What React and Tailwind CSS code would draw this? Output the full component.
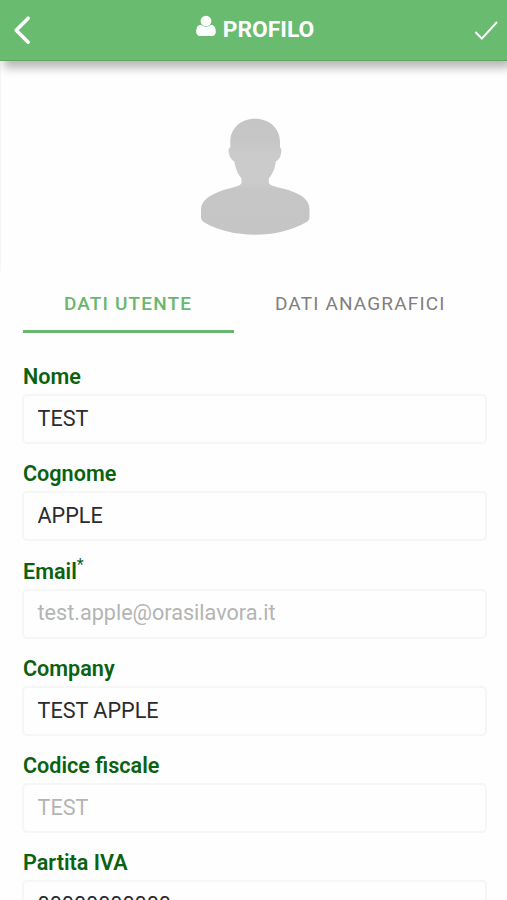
import React from 'react'

const fields = [
  { label: 'Nome', value: 'TEST' },
  { label: 'Cognome', value: 'APPLE' },
  { label: 'Email', value: 'test.apple@orasilavora.it', required: true, disabled: true },
  { label: 'Company', value: 'TEST APPLE' },
  { label: 'Codice fiscale', value: 'TEST', disabled: true },
  { label: 'Partita IVA', value: '00000000000' },
]

function Header() {
  return (
    <header className="relative h-[61px] shrink-0 flex items-center justify-between bg-[#69bb6f] border-b border-[#5da662] text-white shadow-[4px_7px_9px_rgba(0,0,0,0.28)]">
      <svg className="ml-[13px] w-[18px] h-[30px]" viewBox="0 0 18 30" fill="none" stroke="currentColor" strokeWidth="3.6" strokeLinecap="round" strokeLinejoin="round">
        <path d="M15.2 3.2 3.2 15.2 15.2 27.2" />
      </svg>
      <h1 className="flex items-center gap-[7px] pl-[5px] text-[22.8px] leading-none font-bold">
        <svg className="w-5 h-[22px] -mt-[7px]" viewBox="0 0 20 22" fill="currentColor">
          <ellipse cx="10" cy="6" rx="5.4" ry="5.3" />
          <path d="M5 9.8C1.800 10 .2 12.800.2 16.600c0 3 1.400 4.400 3.800 4.400h12c2.400 0 3.800-1.400 3.800-4.400 0-3.800-1.600-6.600-4.800-6.800-1.400 1.300-3 2-5 2s-3.600-.7-5-2Z" />
        </svg>
        <span>PROFILO</span>
      </h1>
      <svg className="mr-[9px] mt-[2px] w-6 h-[22px]" viewBox="0 0 24 22" fill="none" stroke="currentColor" strokeWidth="2">
        <path d="m1.500 12 6.300 6.600L23 2" />
      </svg>
    </header>
  )
}

function Avatar() {
  return (
    <div className="h-[210px] shrink-0 flex justify-center border-l border-[#f6f6f6]">
      <svg className="mt-[57px] ml-px w-[110px] h-[118px]" viewBox="200 118 110 118">
        <defs>
          <linearGradient id="avatarShade" x1="0" y1="0" x2="0" y2="1">
            <stop offset="0" stopColor="#c5c5c5" />
            <stop offset="0.2" stopColor="#c6c6c6" />
            <stop offset="0.3" stopColor="#cbcbcb" />
            <stop offset="0.54" stopColor="#cbcbcb" />
            <stop offset="0.62" stopColor="#c6c6c6" />
            <stop offset="1" stopColor="#c5c5c5" />
          </linearGradient>
        </defs>
        <path
          fill="url(#avatarShade)"
          d="M255 118.800C240.500 118.800 230.300 128.500 230.300 142V147.500C228.300 148 228.200 151 229 154C229.800 157.500 232 160 234.300 161.500C235.500 169 238 174.500 241.500 178.500V183C240.500 186 234 187 228 188.800C211 193.500 201 200 201 210V216.500C201 219.500 202 221.200 204 222.300C218 230.500 236 234.700 255 234.700C274 234.700 292 230.500 306.500 222C308.500 220.800 309.500 219.500 309.500 216.500V209C309.500 199 300 193.500 284 188.800C277 187 270.500 186 268.800 183V178.500C272.300 174.500 275 169 275.800 161.500C278.500 160 280.200 157.500 281 154C281.600 151 281.400 148 280 147.500V142C280 128.500 269.500 118.800 255 118.800Z"
        />
      </svg>
    </div>
  )
}

function Tabs() {
  return (
    <div className="flex shrink-0 ml-[22.5px] mr-5 h-[62px] text-[19px] tracking-[1.15px]">
      <button className="w-[211px] pt-[7px] border-b-[3px] border-[#69b76f] text-[#69b76f] font-medium">DATI UTENTE</button>
      <button className="flex-1 pt-[7px] border-b-[3px] border-transparent text-[#808080]">DATI ANAGRAFICI</button>
    </div>
  )
}

function Field({ label, value, required, disabled }) {
  return (
    <div className="h-[97.3px]">
      <label className="block h-[30px] pl-px text-[21.6px] leading-[25px] font-semibold text-[#0a620e]">
        {label}
        {required && <sup className="text-[16px] leading-none font-normal -top-[9px]">*</sup>}
      </label>
      <div className={`h-[50px] flex items-center px-[13.5px] rounded-[5px] border-2 border-[#f6f6f6] text-[21.6px] ${disabled ? 'text-[#b4b4b4]' : 'text-[#2b2b2b]'}`}>
        <span>{value}</span>
      </div>
    </div>
  )
}

function App() {
  return (
    <div className="h-[900px] w-full overflow-hidden flex flex-col bg-[#fefefe] font-['Roboto',sans-serif]">
      <Header />
      <Avatar />
      <Tabs />
      <form className="mt-[31px] pl-[22px] pr-5">
        {fields.map((field) => (
          <Field key={field.label} {...field} />
        ))}
      </form>
    </div>
  )
}

export default App
